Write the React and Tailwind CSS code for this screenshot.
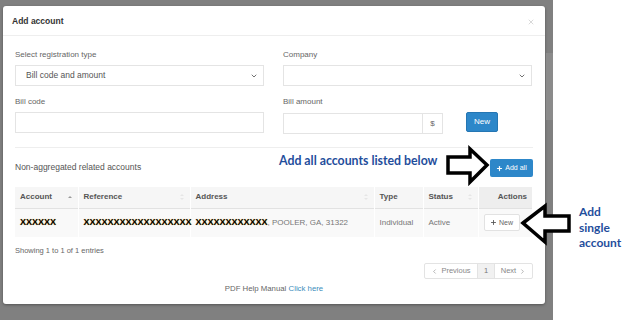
import { ChevronDown, ChevronLeft, ChevronRight, Plus, X } from 'lucide-react';

const columns = [
    { key: 'account', label: 'Account', width: 'w-[63px]', sort: 'asc' },
    { key: 'reference', label: 'Reference', width: 'w-[112px]', sort: 'both' },
    { key: 'address', label: 'Address', width: 'w-[184px]', sort: 'both' },
    { key: 'type', label: 'Type', width: 'w-[49px]', sort: 'none' },
    { key: 'status', label: 'Status', width: 'w-[55px]', sort: 'both' },
];

function SortIcon({ sort }) {
    if (sort === 'asc') {
        return (
            <svg width="6" height="6" viewBox="0 0 6 6" className="shrink-0">
                <path d="M1 4 L3 2 L5 4 Z" fill="#9a9a9a" />
            </svg>
        );
    }
    if (sort === 'both') {
        return (
            <svg width="6" height="8" viewBox="0 0 6 8" className="shrink-0">
                <path d="M1 3 L3 1 L5 3 Z M1 5 L3 7 L5 5 Z" fill="#e6e6e6" />
            </svg>
        );
    }
    return null;
}

function Field({ label, children }) {
    return (
        <div>
            <div className="mb-[5px] pt-[2px] text-[8px] leading-[10px] text-[#666]">{label}</div>
            {children}
        </div>
    );
}

function Redacted({ children }) {
    return <span className="text-[9px] font-bold text-black [text-shadow:0_0_1px_#d9a441]">{children}</span>;
}

function Modal() {
    return (
        <div className="flex h-[298px] w-[542px] flex-col rounded-[3px] bg-white shadow-[0_1px_3px_rgba(0,0,0,0.35)]">
            {/* Header */}
            <div className="flex h-[30px] shrink-0 items-center justify-between border-b border-[#eeeeee] pl-[9px] pr-[10px] pt-[2px]">
                <span className="text-[8.5px] font-bold text-[#333]">Add account</span>
                <X size={8} strokeWidth={2} className="text-[#c4c4c4]" />
            </div>

            <div className="px-[12px] pt-[12px]">
                {/* Form */}
                <div className="grid grid-cols-[249px_249px] gap-x-[19px] gap-y-[9px]">
                    <Field label="Select registration type">
                        <div className="flex h-[21px] items-center justify-between border border-[#e4e4e4] pl-[10px] pr-[5px] text-[8.5px] text-[#555]">
                            <span>Bill code and amount</span>
                            <ChevronDown size={8} strokeWidth={2.5} className="text-[#555]" />
                        </div>
                    </Field>
                    <Field label="Company">
                        <div className="flex h-[21px] items-center justify-end border border-[#e4e4e4] pr-[5px]">
                            <ChevronDown size={8} strokeWidth={2.5} className="text-[#555]" />
                        </div>
                    </Field>
                    <Field label="Bill code">
                        <div className="h-[21px] border border-[#e4e4e4]" />
                    </Field>
                    <Field label="Bill amount">
                        <div className="flex items-center">
                            <div className="flex h-[21px] w-[160px]">
                                <div className="flex-1 border border-[#e4e4e4]" />
                                <div className="flex w-[20px] items-center justify-center border border-l-0 border-[#e4e4e4] text-[8px] text-[#666]">
                                    $
                                </div>
                            </div>
                            <button className="mb-[3px] ml-[23px] flex h-[20px] w-[32px] items-center justify-center rounded-[2px] border border-[#2576b3] bg-[#2d87c9] text-[8px] text-white">
                                New
                            </button>
                        </div>
                    </Field>
                </div>

                <div className="mt-[12px] border-t border-[#eeeeee]" />

                {/* Related accounts */}
                <div className="mt-[11px] flex h-[18px] items-center justify-between">
                    <span className="pb-[2px] text-[8.5px] text-[#555]">Non-aggregated related accounts</span>
                    <button className="flex h-[18px] w-[43px] items-center justify-center gap-[2px] rounded-[2px] bg-[#2d87c9] text-[7px] text-white">
                        <Plus size={7} strokeWidth={4} />
                        Add all
                    </button>
                </div>

                <table className="mt-[10px] w-[517px] table-fixed border-collapse text-[8px]">
                    <thead>
                        <tr className="h-[21px] border-b border-[#e2e2e2] bg-[#f6f6f6]">
                            {columns.map((col) => (
                                <th key={col.key} className={`${col.width} border-r border-white px-[5px] text-left font-bold text-[#555]`}>
                                    <div className="flex items-center justify-between">
                                        <span>{col.label}</span>
                                        <SortIcon sort={col.sort} />
                                    </div>
                                </th>
                            ))}
                            <th className="w-[54px] bg-[#eeeeee] px-[5px] text-right font-bold text-[#555]">Actions</th>
                        </tr>
                    </thead>
                    <tbody>
                        <tr className="h-[29px] bg-[#f9f9f9] text-[#777]">
                            <td className="border-r border-white px-[5px]">
                                <Redacted>XXXXXX</Redacted>
                            </td>
                            <td className="overflow-visible whitespace-nowrap border-r border-white px-[5px]">
                                <Redacted>XXXXXXXXXXXXXXXXXX</Redacted>
                            </td>
                            <td className="whitespace-nowrap border-r border-white px-[5px]">
                                <Redacted>XXXXXXXXXXXX</Redacted>
                                <span>, POOLER, GA, 31322</span>
                            </td>
                            <td className="border-r border-white px-[5px]">Individual</td>
                            <td className="border-r border-white px-[5px]">Active</td>
                            <td className="px-[5px]">
                                <button className="flex h-[17px] w-[36px] items-center justify-center gap-[2px] rounded-[2px] border border-[#e2e2e2] bg-white text-[7px] text-[#666]">
                                    <Plus size={7} strokeWidth={3} className="text-[#555]" />
                                    New
                                </button>
                            </td>
                        </tr>
                    </tbody>
                </table>

                <div className="mt-[9px] text-[7.5px] leading-[10px] text-[#666]">Showing 1 to 1 of 1 entries</div>

                <div className="mt-[7px] flex justify-end">
                    <div className="flex h-[16px] rounded-[2px] border border-[#e3e3e3] text-[7.5px] text-[#888]">
                        <div className="flex w-[53px] items-center justify-center gap-[3px] border-r border-[#e3e3e3]">
                            <ChevronLeft size={7} strokeWidth={2} />
                            Previous
                        </div>
                        <div className="flex w-[17px] items-center justify-center border-r border-[#e3e3e3] bg-[#f1f1f1] text-[#777]">1</div>
                        <div className="flex w-[37px] items-center justify-center gap-[3px]">
                            Next
                            <ChevronRight size={7} strokeWidth={2} />
                        </div>
                    </div>
                </div>

                <div className="mt-[5px] text-center text-[7.8px] leading-[10px] text-[#666]">
                    PDF Help Manual <span className="text-[#3c8dbc]">Click here</span>
                </div>
            </div>
        </div>
    );
}

function Annotations() {
    return (
        <>
            <div className="absolute left-[279px] top-[152px] font-['Lato','Open_Sans',sans-serif] text-[12.3px] font-bold leading-[18px] text-[#1f4e9c]">
                Add all accounts listed below
            </div>
            <svg className="absolute left-[444px] top-[145px]" width="48" height="42" viewBox="0 0 48 42">
                <polygon points="4,12 26,12 26,4 43,20 26,37 26,28 4,28" fill="white" stroke="black" strokeWidth="3.5" />
            </svg>
            <svg className="absolute left-[518px] top-[201px]" width="56" height="46" viewBox="0 0 56 46">
                <polygon points="5,22 27,5 27,15 51,15 51,30 27,30 27,41" fill="white" stroke="black" strokeWidth="3.5" />
            </svg>
            <div className="absolute left-[579px] top-[204px] font-['Lato','Open_Sans',sans-serif] text-[12px] font-bold leading-[15.5px] text-[#1f4e9c]">
                Add
                <br />
                single
                <br />
                account
            </div>
        </>
    );
}

export default function App() {
    return (
        <div className="relative flex h-[320px] w-[624px] overflow-hidden bg-white font-['Liberation_Sans',Arial,sans-serif]">
            <div className="flex h-full w-[553px] shrink-0 bg-[#808080] pl-[3px] pt-[6px]">
                <Modal />
                <div className="ml-[1px] mt-[47px] h-[67px] w-[7px] bg-[#8b8b8b]" />
            </div>
            <Annotations />
        </div>
    );
}
